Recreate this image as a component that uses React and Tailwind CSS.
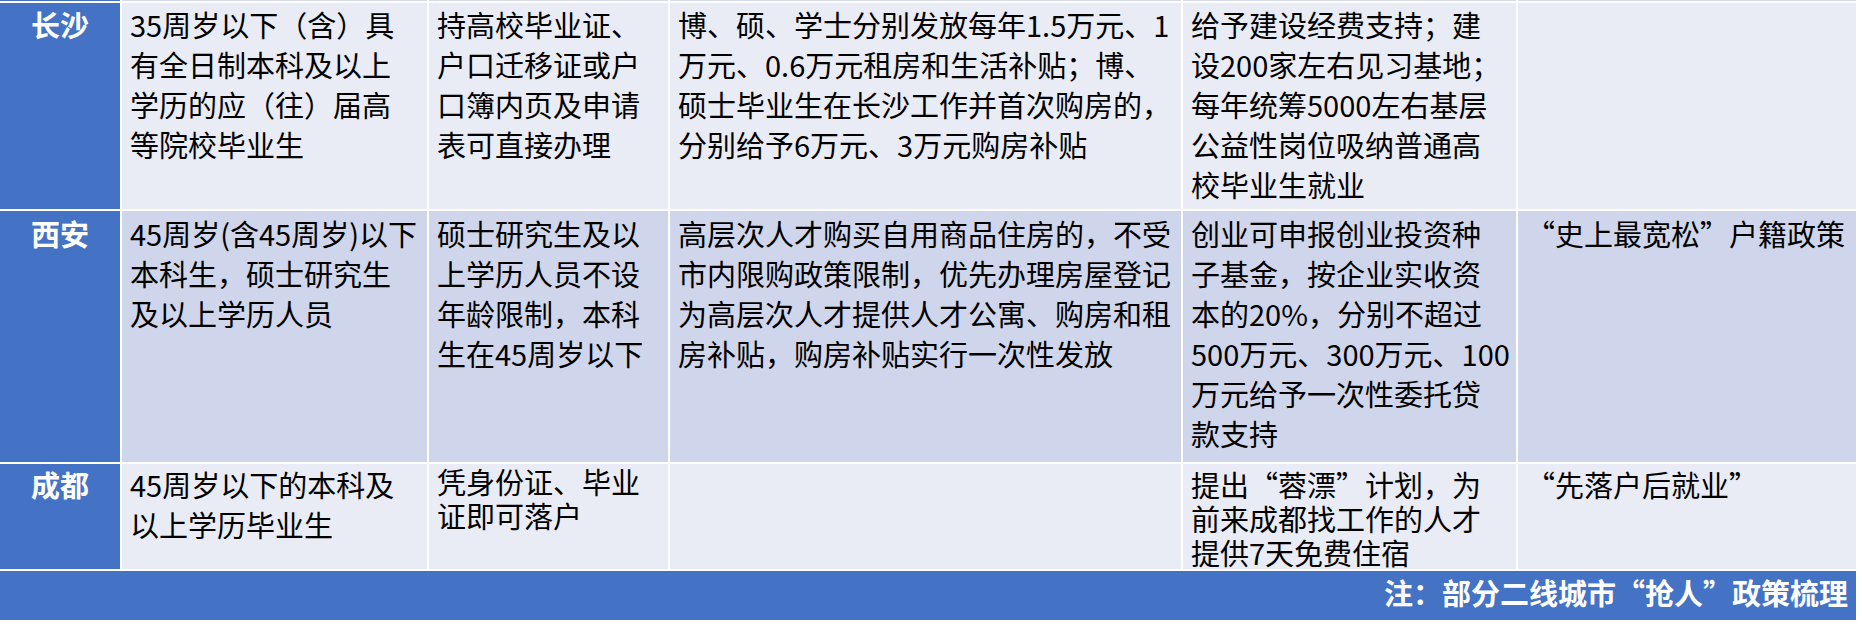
const rows = [
  {
    city: '长沙',
    tone: 'bg-[#E9EBF5]',
    pt: 'pt-[1px]',
    cells: [
      { lines: ['35周岁以下（含）具', '有全日制本科及以上', '学历的应（往）届高', '等院校毕业生'] },
      { lines: ['持高校毕业证、', '户口迁移证或户', '口簿内页及申请', '表可直接办理'] },
      {
        lines: [
          '博、硕、学士分别发放每年1.5万元、1',
          '万元、0.6万元租房和生活补贴；博、',
          '硕士毕业生在长沙工作并首次购房的，',
          '分别给予6万元、3万元购房补贴',
        ],
      },
      { lines: ['给予建设经费支持；建', '设200家左右见习基地；', '每年统筹5000左右基层', '公益性岗位吸纳普通高', '校毕业生就业'] },
      { lines: [] },
    ],
  },
  {
    city: '西安',
    tone: 'bg-[#CFD5EA]',
    pt: 'pt-[2px]',
    cells: [
      { lines: ['45周岁(含45周岁)以下', '本科生，硕士研究生', '及以上学历人员'] },
      { lines: ['硕士研究生及以', '上学历人员不设', '年龄限制，本科', '生在45周岁以下'] },
      {
        lines: [
          '高层次人才购买自用商品住房的，不受',
          '市内限购政策限制，优先办理房屋登记',
          '为高层次人才提供人才公寓、购房和租',
          '房补贴，购房补贴实行一次性发放',
        ],
      },
      { lines: ['创业可申报创业投资种', '子基金，按企业实收资', '本的20%，分别不超过', '500万元、300万元、100', '万元给予一次性委托贷', '款支持'] },
      { lines: ['“史上最宽松”户籍政策'] },
    ],
  },
  {
    city: '成都',
    tone: 'bg-[#E9EBF5]',
    pt: 'pt-0',
    cells: [
      { lines: ['45周岁以下的本科及', '以上学历毕业生'] },
      { lines: ['凭身份证、毕业', '证即可落户'], tight: true },
      { lines: [] },
      { lines: ['提出“蓉漂”计划，为', '前来成都找工作的人才', '提供7天免费住宿'], tight: true, pt: 'pt-[3px]' },
      { lines: ['“先落户后就业”'] },
    ],
  },
];

const font = "font-['Noto_Sans_CJK_SC','Noto_Sans',sans-serif]";

export default function App() {
  return (
    <div className={`w-[1856px] bg-white ${font}`}>
      <div className="grid grid-cols-[120px_305px_239px_511px_333px_338px] grid-rows-[1px_206px_251px_105px] gap-[2px]">
        {/* sliver of the row above, cut off by the crop */}
        <div className="bg-[#4472C4]" />
        {[0, 1, 2, 3, 4].map(i => (
          <div key={i} className="bg-[#D6DAEA]" />
        ))}

        {rows.map(row => (
          <Row key={row.city} row={row} />
        ))}
      </div>

      <div className="mt-[2px] flex h-[49px] items-start justify-end bg-[#4472C4] pr-[8px] pt-[1px]">
        <span className="text-[29px] font-bold leading-[40px] text-white">注：部分二线城市“抢人”政策梳理</span>
      </div>
    </div>
  );
}

function Row({ row }) {
  return (
    <>
      <div className={`bg-[#4472C4] text-center text-[29px] font-bold leading-[40px] text-white ${row.pt}`}>
        {row.city}
      </div>
      {row.cells.map((cell, i) => (
        <div
          key={i}
          className={`${row.tone} px-[8px] text-[29px] text-black ${cell.tight ? 'leading-[34px]' : 'leading-[40px]'} ${cell.pt || row.pt}`}
        >
          {cell.lines.map((line, j) => (
            <div key={j} className="whitespace-nowrap">
              {line}
            </div>
          ))}
        </div>
      ))}
    </>
  );
}
